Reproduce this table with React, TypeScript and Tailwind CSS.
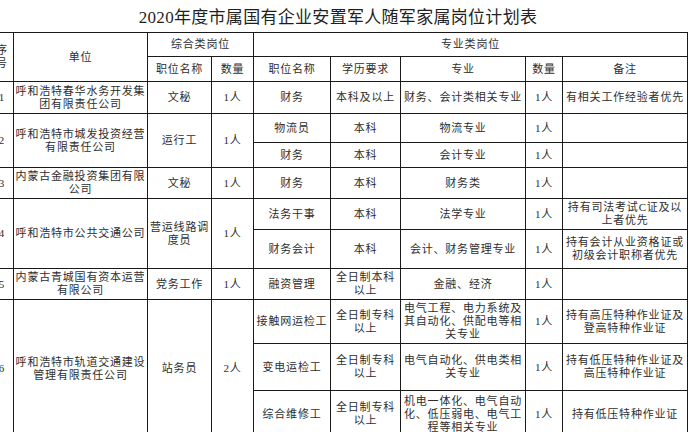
import React from "react";

const td =
  "border-[1.5px] border-[#1a1a1a] text-center align-middle p-0 leading-[13px] whitespace-nowrap";

function L({ lines }: { lines: string[] }) {
  return (
    <>
      {lines.map((l, i) => (
        <React.Fragment key={i}>
          {i > 0 && <br />}
          {l}
        </React.Fragment>
      ))}
    </>
  );
}

export default function App() {
  return (
    <div
      className="w-[690px] h-[432px] overflow-hidden bg-white text-[#2e2e2e]"
      style={{ fontFamily: '"Liberation Serif", "Noto Sans CJK SC", serif' }}
    >
      <div className="h-[32px] flex items-center justify-center pr-[14px] pt-[3px] text-[17px] tracking-[0.3px] text-[#1f1f1f]">
        2020年度市属国有企业安置军人随军家属岗位计划表
      </div>
      <table className="ml-[-10px] table-fixed border-collapse text-[11px] tracking-[0.8px] w-[697px]">
        <colgroup>
          <col className="w-[23px]" />
          <col className="w-[134px]" />
          <col className="w-[64px]" />
          <col className="w-[42px]" />
          <col className="w-[77px]" />
          <col className="w-[70px]" />
          <col className="w-[125px]" />
          <col className="w-[37px]" />
          <col className="w-[125px]" />
        </colgroup>
        <tbody>
          <tr className="h-[24px]">
            <td rowSpan={2} className={td}>
              <L lines={["序", "号"]} />
            </td>
            <td rowSpan={2} className={td}>单位</td>
            <td colSpan={2} className={td}>综合类岗位</td>
            <td colSpan={5} className={td}>专业类岗位</td>
          </tr>
          <tr className="h-[25px]">
            <td className={td}>职位名称</td>
            <td className={td}>数量</td>
            <td className={td}>职位名称</td>
            <td className={td}>学历要求</td>
            <td className={td}>专业</td>
            <td className={td}>数量</td>
            <td className={td}>备注</td>
          </tr>
          {/* 1 */}
          <tr className="h-[32px]">
            <td className={td}>1</td>
            <td className={td}>
              <L lines={["呼和浩特春华水务开发集", "团有限责任公司"]} />
            </td>
            <td className={td}>文秘</td>
            <td className={td}>1人</td>
            <td className={td}>财务</td>
            <td className={td}>本科及以上</td>
            <td className={td}>财务、会计类相关专业</td>
            <td className={td}>1人</td>
            <td className={td}>有相关工作经验者优先</td>
          </tr>
          {/* 2 */}
          <tr className="h-[29px]">
            <td rowSpan={2} className={td}>2</td>
            <td rowSpan={2} className={td}>
              <L lines={["呼和浩特市城发投资经营", "有限责任公司"]} />
            </td>
            <td rowSpan={2} className={td}>运行工</td>
            <td rowSpan={2} className={td}>1人</td>
            <td className={td}>物流员</td>
            <td className={td}>本科</td>
            <td className={td}>物流专业</td>
            <td className={td}>1人</td>
            <td className={td}></td>
          </tr>
          <tr className="h-[25px]">
            <td className={td}>财务</td>
            <td className={td}>本科</td>
            <td className={td}>会计专业</td>
            <td className={td}>1人</td>
            <td className={td}></td>
          </tr>
          {/* 3 */}
          <tr className="h-[31px]">
            <td className={td}>3</td>
            <td className={td}>
              <L lines={["内蒙古金融投资集团有限", "公司"]} />
            </td>
            <td className={td}>文秘</td>
            <td className={td}>1人</td>
            <td className={td}>财务</td>
            <td className={td}>本科</td>
            <td className={td}>财务类</td>
            <td className={td}>1人</td>
            <td className={td}></td>
          </tr>
          {/* 4 */}
          <tr className="h-[31px]">
            <td rowSpan={2} className={td}>4</td>
            <td rowSpan={2} className={td}>呼和浩特市公共交通公司</td>
            <td rowSpan={2} className={td}>
              <L lines={["营运线路调", "度员"]} />
            </td>
            <td rowSpan={2} className={td}>1人</td>
            <td className={td}>法务干事</td>
            <td className={td}>本科</td>
            <td className={td}>法学专业</td>
            <td className={td}>1人</td>
            <td className={td}>
              <L lines={["持有司法考试C证及以", "上者优先"]} />
            </td>
          </tr>
          <tr className="h-[39px]">
            <td className={td}>财务会计</td>
            <td className={td}>本科</td>
            <td className={td}>会计、财务管理专业</td>
            <td className={td}>1人</td>
            <td className={td}>
              <L lines={["持有会计从业资格证或", "初级会计职称者优先"]} />
            </td>
          </tr>
          {/* 5 */}
          <tr className="h-[31px]">
            <td className={td}>5</td>
            <td className={td}>
              <L lines={["内蒙古青城国有资本运营", "有限公司"]} />
            </td>
            <td className={td}>党务工作</td>
            <td className={td}>1人</td>
            <td className={td}>融资管理</td>
            <td className={td}>
              <L lines={["全日制本科", "以上"]} />
            </td>
            <td className={td}>金融、经济</td>
            <td className={td}>1人</td>
            <td className={td}></td>
          </tr>
          {/* 6 */}
          <tr className="h-[44px]">
            <td rowSpan={3} className={td}>6</td>
            <td rowSpan={3} className={td}>
              <L lines={["呼和浩特市轨道交通建设", "管理有限责任公司"]} />
            </td>
            <td rowSpan={3} className={td}>站务员</td>
            <td rowSpan={3} className={td}>2人</td>
            <td className={td}>接触网运检工</td>
            <td className={td}>
              <L lines={["全日制专科", "以上"]} />
            </td>
            <td className={td}>
              <L lines={["电气工程、电力系统及", "其自动化、供配电等相", "关专业"]} />
            </td>
            <td className={td}>1人</td>
            <td className={td}>
              <L lines={["持有高压特种作业证及", "登高特种作业证"]} />
            </td>
          </tr>
          <tr className="h-[47px]">
            <td className={td}>变电运检工</td>
            <td className={td}>
              <L lines={["全日制专科", "以上"]} />
            </td>
            <td className={td}>
              <L lines={["电气自动化、供电类相", "关专业"]} />
            </td>
            <td className={td}>1人</td>
            <td className={td}>
              <L lines={["持有低压特种作业证及", "高压特种作业证"]} />
            </td>
          </tr>
          <tr className="h-[47px]">
            <td className={td}>综合维修工</td>
            <td className={td}>
              <L lines={["全日制专科", "以上"]} />
            </td>
            <td className={td}>
              <L lines={["机电一体化、电气自动", "化、低压弱电、电气工", "程等相关专业"]} />
            </td>
            <td className={td}>1人</td>
            <td className={td}>持有低压特种作业证</td>
          </tr>
        </tbody>
      </table>
    </div>
  );
}
